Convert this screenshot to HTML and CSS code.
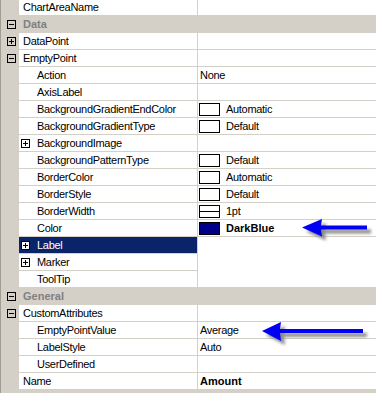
FILE: index.html
```html
<!DOCTYPE html>
<html lang="en">
<head>
  <meta charset="UTF-8" />
  <title>Properties</title>
  <link rel="stylesheet" href="styles.css">
</head>
<body>

<div class="grid">
  <div class="row"><div class="gut"></div><div class="name">ChartAreaName</div><div class="val"></div></div>

  <div class="row cat">
    <div class="gut"><svg class="box" width="9" height="9"><rect x="0.5" y="0.5" width="8" height="8"/><path d="M2 4.5h5"/></svg></div>
    <div class="name">Data</div><div class="val"></div>
  </div>

  <div class="row">
    <div class="gut"><svg class="box" width="9" height="9"><rect x="0.5" y="0.5" width="8" height="8"/><path d="M2 4.5h5M4.5 2v5"/></svg></div>
    <div class="name">DataPoint</div><div class="val"></div>
  </div>
  <div class="row">
    <div class="gut"><svg class="box" width="9" height="9"><rect x="0.5" y="0.5" width="8" height="8"/><path d="M2 4.5h5"/></svg></div>
    <div class="name">EmptyPoint</div><div class="val"></div>
  </div>

  <div class="row"><div class="gut"></div><div class="name child">Action</div><div class="val"><span class="txt">None</span></div></div>
  <div class="row"><div class="gut"></div><div class="name child">AxisLabel</div><div class="val"></div></div>
  <div class="row"><div class="gut"></div><div class="name child">BackgroundGradientEndColor</div><div class="val"><span class="swatch"></span><span class="after">Automatic</span></div></div>
  <div class="row"><div class="gut"></div><div class="name child">BackgroundGradientType</div><div class="val"><span class="swatch"></span><span class="after">Default</span></div></div>
  <div class="row">
    <div class="gut"></div>
    <div class="name sub"><svg class="box" width="9" height="9"><rect x="0.5" y="0.5" width="8" height="8"/><path d="M2 4.5h5M4.5 2v5"/></svg><span>BackgroundImage</span></div>
    <div class="val"></div>
  </div>
  <div class="row"><div class="gut"></div><div class="name child">BackgroundPatternType</div><div class="val"><span class="swatch"></span><span class="after">Default</span></div></div>
  <div class="row"><div class="gut"></div><div class="name child">BorderColor</div><div class="val"><span class="swatch"></span><span class="after">Automatic</span></div></div>
  <div class="row"><div class="gut"></div><div class="name child">BorderStyle</div><div class="val"><span class="swatch"></span><span class="after">Default</span></div></div>
  <div class="row"><div class="gut"></div><div class="name child">BorderWidth</div><div class="val"><span class="swatch line"></span><span class="after">1pt</span></div></div>
  <div class="row"><div class="gut"></div><div class="name child">Color</div><div class="val"><span class="swatch navy"></span><span class="after bold">DarkBlue</span></div></div>
  <div class="row selected">
    <div class="gut"></div>
    <div class="name sub"><svg class="box" width="9" height="9"><rect x="0.5" y="0.5" width="8" height="8"/><path d="M2 4.5h5M4.5 2v5"/></svg><span>Label</span></div>
    <div class="val cut-long"></div>
  </div>
  <div class="row">
    <div class="gut"></div>
    <div class="name sub"><svg class="box" width="9" height="9"><rect x="0.5" y="0.5" width="8" height="8"/><path d="M2 4.5h5M4.5 2v5"/></svg><span>Marker</span></div>
    <div class="val cut-short"></div>
  </div>
  <div class="row"><div class="gut"></div><div class="name child">ToolTip</div><div class="val"></div></div>

  <div class="row cat">
    <div class="gut"><svg class="box" width="9" height="9"><rect x="0.5" y="0.5" width="8" height="8"/><path d="M2 4.5h5"/></svg></div>
    <div class="name">General</div><div class="val"></div>
  </div>
  <div class="row">
    <div class="gut"><svg class="box" width="9" height="9"><rect x="0.5" y="0.5" width="8" height="8"/><path d="M2 4.5h5"/></svg></div>
    <div class="name">CustomAttributes</div><div class="val"></div>
  </div>
  <div class="row"><div class="gut"></div><div class="name child">EmptyPointValue</div><div class="val"><span class="txt">Average</span></div></div>
  <div class="row"><div class="gut"></div><div class="name child">LabelStyle</div><div class="val"><span class="txt">Auto</span></div></div>
  <div class="row"><div class="gut"></div><div class="name child">UserDefined</div><div class="val"></div></div>
  <div class="row"><div class="gut"></div><div class="name">Name</div><div class="val"><span class="txt bold">Amount</span></div></div>
</div>

<!-- arrows drawn over the grid -->
<svg class="arrows" width="376" height="393">
  <defs>
    <filter id="soft" x="-10%" y="-50%" width="120%" height="200%">
      <feGaussianBlur stdDeviation="1.4" />
    </filter>
  </defs>
  <g fill="#8c8c8c" filter="url(#soft)" transform="translate(4 4)">
    <path d="M302 227.5 L322 219 L321 225.5 L367 225.5 L367 229.5 L321 229.5 L322 236.5 Z" />
    <path d="M262 331 L281 322 L280 329 L363 329 L363 333 L280 333 L281 341 Z" />
  </g>
  <g fill="#0000f4">
    <path d="M302 227.5 L322 219 L321 225.5 L367 225.5 L367 229.5 L321 229.5 L322 236.5 Z" />
    <path d="M262 331 L281 322 L280 329 L363 329 L363 333 L280 333 L281 341 Z" />
  </g>
</svg>

</body>
</html>
```

FILE: styles.css
```css
* {
  box-sizing: border-box;
  margin: 0;
  padding: 0;
}

body {
  font-family: "Liberation Sans", Arial, sans-serif;
  font-size: 11px;
  letter-spacing: -0.3px;
  color: #000;
  background: #d4d0c8;
  width: 376px;
  height: 393px;
  overflow: hidden;
  border-left: 1px solid #a09d96;
}

.grid {
  margin-top: -1px;
}

.row {
  display: grid;
  grid-template-columns: 18px 179px 1fr;
  height: 17px;
}

.gut {
  display: flex;
  align-items: center;
  padding-left: 6px;
  background: #d4d0c8;
}

.name,
.val {
  display: flex;
  align-items: center;
  background: #fff;
  border-bottom: 1px solid #d4d0c8;
  white-space: nowrap;
}

.name {
  padding-left: 4px;
  border-right: 1px solid #d4d0c8;
}

.name.child {
  padding-left: 18px;
}

.name.sub {
  padding-left: 2px;
}

.name.sub span {
  margin-left: 7px;
}

.box {
  display: block;
  fill: none;
  stroke: #000;
  stroke-width: 1;
  shape-rendering: crispEdges;
}

.cat .name,
.cat .val {
  background: #d4d0c8;
  color: #808080;
  font-weight: bold;
  letter-spacing: 0;
}

.selected .name {
  background: #0a246a;
  color: #fff;
}

.selected .box rect {
  fill: #fff;
}

.txt {
  padding-left: 2px;
}

.swatch {
  width: 21px;
  height: 13px;
  margin-left: 1px;
  border: 1px solid #000;
  background: #fff;
}

.swatch.line {
  background: linear-gradient(#000, #000) center / 100% 1px no-repeat, #fff;
}

.swatch.navy {
  background: #000088;
}

.after {
  margin-left: 6px;
}

.bold {
  font-weight: bold;
  letter-spacing: 0;
}

/* value lines partly rubbed out in the original */
.val.cut-long {
  border-bottom-color: #fff;
  background: linear-gradient(#d4d0c8, #d4d0c8) left bottom / 21px 1px no-repeat, #fff;
  background-origin: border-box;
  background-clip: border-box;
}

.val.cut-short {
  border-bottom-color: #fff;
  background: linear-gradient(#d4d0c8, #d4d0c8) left bottom / 6px 1px no-repeat, #fff;
  background-origin: border-box;
  background-clip: border-box;
}

.arrows {
  position: absolute;
  top: 0;
  left: 0;
  pointer-events: none;
}
```
